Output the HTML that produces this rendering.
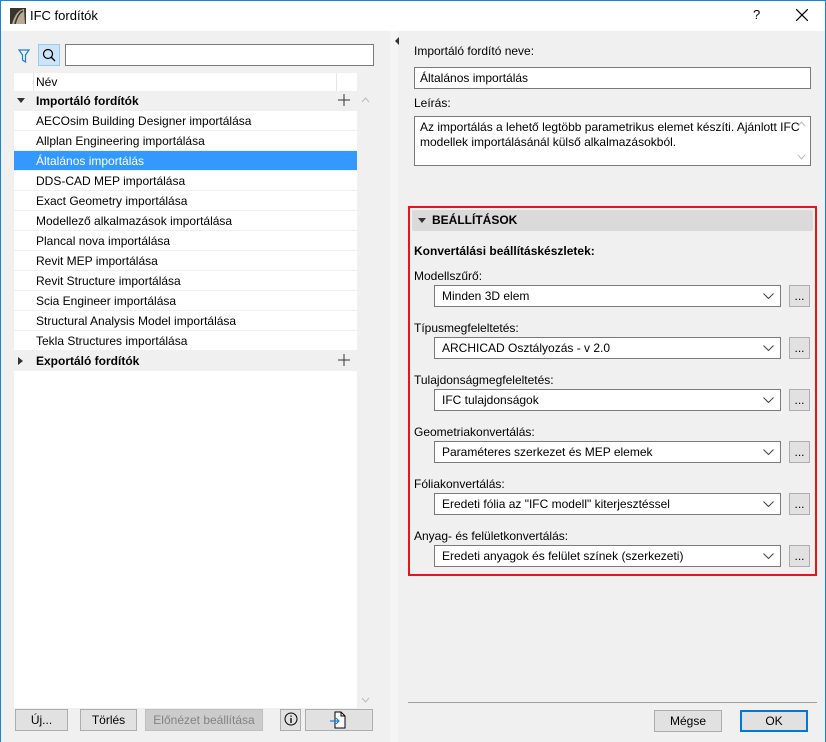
<!DOCTYPE html><html><head><meta charset="utf-8"><style>
*{box-sizing:border-box;margin:0;padding:0}
body{width:826px;height:742px;overflow:hidden;font-family:"Liberation Sans",sans-serif;font-size:12px;color:#000;background:#f0f0f0;position:relative}
.a{position:absolute}
.win{left:0;top:0;width:826px;height:742px;border:1px solid #1883d7;border-bottom:none}
.title{left:1px;top:1px;width:824px;height:30px;background:#fff}
.row{position:absolute;left:14px;width:343px;height:20px;line-height:20px;padding-left:22px;background:#fff;border-bottom:1px solid #f0f0f0;white-space:nowrap}
.grp{background:#f0f0f0;font-weight:bold}
.sel{background:#3399ff;color:#fff}
.btn{position:absolute;height:22px;border:1px solid #adadad;background:#e1e1e1;text-align:center;line-height:20px}
.inp{position:absolute;background:#fff;border:1px solid #7a7a7a}
.dd{position:absolute;left:434px;width:347px;height:22px;background:#fff;border:1px solid #7a7a7a;line-height:20px;padding-left:7px}
.dd svg{position:absolute;right:6px;top:7px}
.dot{position:absolute;left:789px;width:21px;height:22px;border:1px solid #adadad;background:#e1e1e1;text-align:center;line-height:20px}
.lbl{position:absolute;left:414px}
</style></head><body>
<div class="a win"></div>
<div class="a title"></div>
<svg class="a" style="left:10px;top:8px" width="16" height="16"><rect width="16" height="16" fill="#3a342c"/><path d="M2 16 Q6 2 14 1 L15 16 Z" fill="#b8ab94"/><path d="M5 16 Q8 5 13 3" stroke="#3a342c" stroke-width="1.5" fill="none"/></svg>
<div class="a" style="left:30px;top:8px;font-size:13px">IFC fordítók</div>
<div class="a" style="left:753px;top:7px;font-size:13px">?</div>
<svg class="a" style="left:796px;top:9px" width="12" height="12"><path d="M0 0L12 12M12 0L0 12" stroke="#000" stroke-width="1.2"/></svg>

<svg class="a" style="left:18px;top:49px" width="12" height="14"><path d="M1 1H11L7.5 6V13L4.5 11V6Z" fill="none" stroke="#1a7fd6" stroke-width="1.2"/></svg>
<div class="a" style="left:38px;top:44px;width:22px;height:22px;background:#cce4f7;border:1px solid #99c9ef"></div>
<svg class="a" style="left:42px;top:48px" width="14" height="14"><circle cx="6" cy="6" r="4.5" fill="none" stroke="#000" stroke-width="1.2"/><path d="M9.3 9.3L13 13" stroke="#000" stroke-width="1.4"/></svg>
<div class="inp" style="left:65px;top:44px;width:309px;height:22px"></div>
<div class="a" style="left:14px;top:73px;width:343px;height:18px;background:#fff"></div>
<div class="a" style="left:33px;top:73px;width:1px;height:18px;background:#e5e5e5"></div>
<div class="a" style="left:336px;top:73px;width:1px;height:18px;background:#e5e5e5"></div>
<div class="a" style="left:36px;top:75px">Név</div>
<div class="a" style="left:14px;top:91px;width:343px;height:617px;background:#fff"></div>
<div class="row grp" style="top:91px">Importáló fordítók</div>
<svg class="a" style="left:17px;top:98px" width="8" height="5"><path d="M0 0H8L4 5Z" fill="#333"/></svg>
<svg class="a" style="left:338px;top:94px" width="12" height="12"><path d="M6 0V12M0 6H12" stroke="#333"/></svg>
<svg class="a" style="left:361px;top:97px" width="9" height="6"><path d="M1 5L4.5 1L8 5" stroke="#bbb" fill="none"/></svg>
<div class="row" style="top:111px">AECOsim Building Designer importálása</div>
<div class="row" style="top:131px">Allplan Engineering importálása</div>
<div class="row sel" style="top:151px">Általános importálás</div>
<div class="row" style="top:171px">DDS-CAD MEP importálása</div>
<div class="row" style="top:191px">Exact Geometry importálása</div>
<div class="row" style="top:211px">Modellező alkalmazások importálása</div>
<div class="row" style="top:231px">Plancal nova importálása</div>
<div class="row" style="top:251px">Revit MEP importálása</div>
<div class="row" style="top:271px">Revit Structure importálása</div>
<div class="row" style="top:291px">Scia Engineer importálása</div>
<div class="row" style="top:311px">Structural Analysis Model importálása</div>
<div class="row" style="top:331px">Tekla Structures importálása</div>
<div class="row grp" style="top:351px">Exportáló fordítók</div>
<svg class="a" style="left:18px;top:357px" width="5" height="8"><path d="M0 0V8L5 4Z" fill="#333"/></svg>
<svg class="a" style="left:338px;top:354px" width="12" height="12"><path d="M6 0V12M0 6H12" stroke="#333"/></svg>
<svg class="a" style="left:361px;top:697px" width="9" height="6"><path d="M1 1L4.5 5L8 1" stroke="#bbb" fill="none"/></svg>
<div class="btn" style="left:15px;top:709px;width:53px">Új...</div>
<div class="btn" style="left:80px;top:709px;width:57px">Törlés</div>
<div class="btn" style="left:145px;top:709px;width:118px;color:#838383;background:#cccccc;border-color:#bfbfbf">Előnézet beállítása</div>
<div class="btn" style="left:280px;top:709px;width:21px"></div>
<svg class="a" style="left:284px;top:712px" width="14" height="14"><circle cx="7" cy="7" r="6" fill="none" stroke="#000"/><path d="M7 6V11M7 3.5V4.8" stroke="#000" stroke-width="1.3"/></svg>
<div class="btn" style="left:305px;top:709px;width:68px"></div>
<svg class="a" style="left:329px;top:711px" width="18" height="18"><path d="M6 1H12L16 5V17H6Z" fill="#fff" stroke="#000"/><path d="M12 1V5H16" fill="none" stroke="#000"/><path d="M1 10H10M7 7L10 10L7 13" stroke="#1a7fd6" fill="none" stroke-width="1.2"/></svg>

<div class="a" style="left:390px;top:31px;width:8px;height:711px;background:#f5f5f5"></div>
<svg class="a" style="left:395px;top:37px" width="4" height="8"><path d="M4 0V8L0 4Z" fill="#333"/></svg>

<div class="lbl" style="top:44px">Importáló fordító neve:</div>
<div class="inp" style="left:414px;top:67px;width:397px;height:22px;line-height:20px;padding-left:5px">Általános importálás</div>
<div class="lbl" style="top:96px">Leírás:</div>
<div class="inp" style="left:414px;top:116px;width:397px;height:50px;padding:3px 5px;line-height:15px">Az importálás a lehető legtöbb parametrikus elemet készíti. Ajánlott IFC modellek importálásánál külső alkalmazásokból.</div>
<svg class="a" style="left:797px;top:121px" width="9" height="6"><path d="M1 5L4.5 1L8 5" stroke="#bbb" fill="none"/></svg>
<svg class="a" style="left:797px;top:154px" width="9" height="6"><path d="M1 1L4.5 5L8 1" stroke="#bbb" fill="none"/></svg>

<div class="a" style="left:408px;top:206px;width:409px;height:370px;border:2px solid #e8141b"></div>
<div class="a" style="left:412px;top:210px;width:401px;height:21px;background:#dadada;border-radius:2px"></div>
<svg class="a" style="left:418px;top:218px" width="8" height="5"><path d="M0 0H8L4 5Z" fill="#333"/></svg>
<div class="a" style="left:432px;top:213px;font-weight:bold">BEÁLLÍTÁSOK</div>
<div class="lbl" style="top:244px;font-weight:bold">Konvertálási beállításkészletek:</div>

<div class="lbl" style="top:269px">Modellszűrő:</div>
<div class="dd" style="top:285px">Minden 3D elem<svg width="11" height="7"><path d="M0.5 0.5L5.5 5.5L10.5 0.5" stroke="#444" fill="none"/></svg></div><div class="dot" style="top:285px">...</div>
<div class="lbl" style="top:321px">Típusmegfeleltetés:</div>
<div class="dd" style="top:337px">ARCHICAD Osztályozás - v 2.0<svg width="11" height="7"><path d="M0.5 0.5L5.5 5.5L10.5 0.5" stroke="#444" fill="none"/></svg></div><div class="dot" style="top:337px">...</div>
<div class="lbl" style="top:373px">Tulajdonságmegfeleltetés:</div>
<div class="dd" style="top:389px">IFC tulajdonságok<svg width="11" height="7"><path d="M0.5 0.5L5.5 5.5L10.5 0.5" stroke="#444" fill="none"/></svg></div><div class="dot" style="top:389px">...</div>
<div class="lbl" style="top:425px">Geometriakonvertálás:</div>
<div class="dd" style="top:441px">Paraméteres szerkezet és MEP elemek<svg width="11" height="7"><path d="M0.5 0.5L5.5 5.5L10.5 0.5" stroke="#444" fill="none"/></svg></div><div class="dot" style="top:441px">...</div>
<div class="lbl" style="top:477px">Fóliakonvertálás:</div>
<div class="dd" style="top:493px">Eredeti fólia az "IFC modell" kiterjesztéssel<svg width="11" height="7"><path d="M0.5 0.5L5.5 5.5L10.5 0.5" stroke="#444" fill="none"/></svg></div><div class="dot" style="top:493px">...</div>
<div class="lbl" style="top:529px">Anyag- és felületkonvertálás:</div>
<div class="dd" style="top:545px">Eredeti anyagok és felület színek (szerkezeti)<svg width="11" height="7"><path d="M0.5 0.5L5.5 5.5L10.5 0.5" stroke="#444" fill="none"/></svg></div><div class="dot" style="top:545px">...</div>

<div class="a" style="left:408px;top:702px;width:409px;height:1px;background:#a0a0a0"></div>
<div class="btn" style="left:654px;top:710px;width:68px">Mégse</div>
<div class="btn" style="left:740px;top:710px;width:68px;border:2px solid #0078d7;line-height:18px">OK</div>
</body></html>
